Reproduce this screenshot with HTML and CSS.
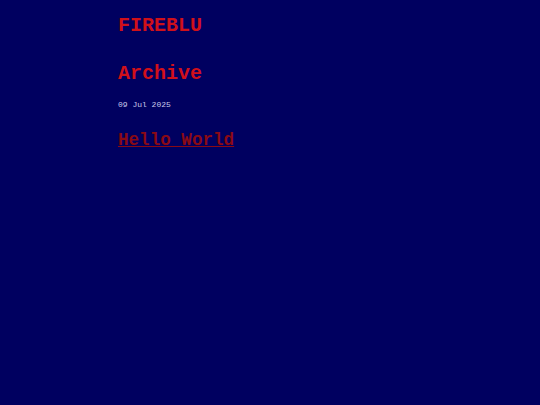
FILE: index.html
```html
<!DOCTYPE html>
<html>
<head>
<meta charset="utf-8">
<link rel="stylesheet" href="styles.css">
</head>
<body>
<div class="wrap">
  <header class="site-title">FIREBLU</header>
  <h1 class="page-title">Archive</h1>
  <div class="date">09 Jul 2025</div>
  <a class="post" href="#">Hello World</a>
</div>
</body>
</html>
```
FILE: styles.css
```css
html, body {
  margin: 0;
  padding: 0;
  background: #000060;
  height: 100%;
}
body {
  font-family: "Liberation Mono", "DejaVu Sans Mono", monospace;
}
.wrap {
  padding: 14px 0 0 118px;
  display: flex;
  flex-direction: column;
  align-items: flex-start;
}
.site-title {
  color: #d0101a;
  font-weight: bold;
  font-size: 20px;
  line-height: 24px;
}
.page-title {
  color: #d0101a;
  font-weight: bold;
  font-size: 20px;
  line-height: 24px;
  margin: 24px 0 0 0;
}
.date {
  color: #c8c8e8;
  font-size: 8px;
  line-height: 10px;
  margin-top: 14px;
}
.post {
  color: #8a0a14;
  font-weight: bold;
  font-size: 17.6px;
  line-height: 22px;
  margin-top: 19px;
}
```
